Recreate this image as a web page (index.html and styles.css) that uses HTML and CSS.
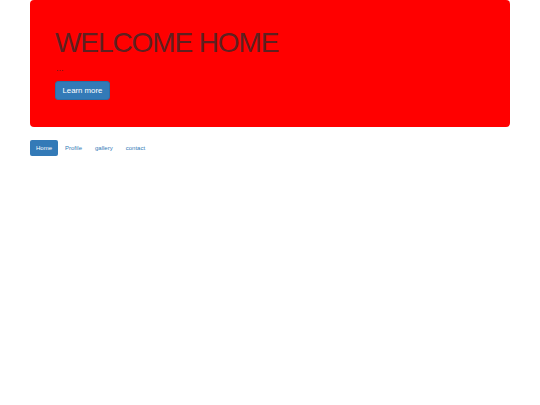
FILE: index.html
```html
<!DOCTYPE html>
<html>
<head>
<meta charset="utf-8">
<link rel="stylesheet" href="styles.css">
</head>
<body>
<div class="container">
  <div class="jumbotron">
    <h1 class="title">WELCOME HOME</h1>
    <p class="lead">...</p>
    <a class="btn" href="#">Learn more</a>
  </div>
  <ul class="pills">
    <li class="pill active"><a href="#">Home</a></li>
    <li class="pill"><a href="#">Profile</a></li>
    <li class="pill"><a href="#">gallery</a></li>
    <li class="pill"><a href="#">contact</a></li>
  </ul>
</div>
</body>
</html>
```

FILE: styles.css
```css
html, body {
  margin: 0;
  padding: 0;
  background: #fff;
  font-family: "Liberation Sans", Arial, sans-serif;
}
.container {
  padding: 0 30px;
}
.jumbotron {
  background: #ff0000;
  border-radius: 4px;
  padding: 29px 25px 27px;
}
.title {
  margin: 0;
  font-size: 28px;
  line-height: 28px;
  font-weight: normal;
  letter-spacing: -1.1px;
  color: #5e2020;
}
.lead {
  margin: 7px 0 0 1px;
  font-size: 9px;
  line-height: 9px;
  color: #5e2020;
}
.btn {
  display: inline-block;
  margin-top: 8px;
  height: 19px;
  box-sizing: border-box;
  padding: 0 6.5px;
  line-height: 17px;
  font-size: 7.8px;
  color: #fff;
  text-decoration: none;
  background: #337ab7;
  border: 1px solid #2e6da4;
  border-radius: 3px;
}
.pills {
  list-style: none;
  margin: 13px 0 0;
  padding: 0;
  display: flex;
}
.pill {
  margin-left: 1px;
}
.pill:first-child {
  margin-left: 0;
}
.pill a {
  display: block;
  height: 16px;
  line-height: 16px;
  padding: 0 6px;
  font-size: 6px;
  color: #337ab7;
  text-decoration: none;
  border-radius: 2px;
}
.pill.active a {
  background: #337ab7;
  color: #fff;
}
```
